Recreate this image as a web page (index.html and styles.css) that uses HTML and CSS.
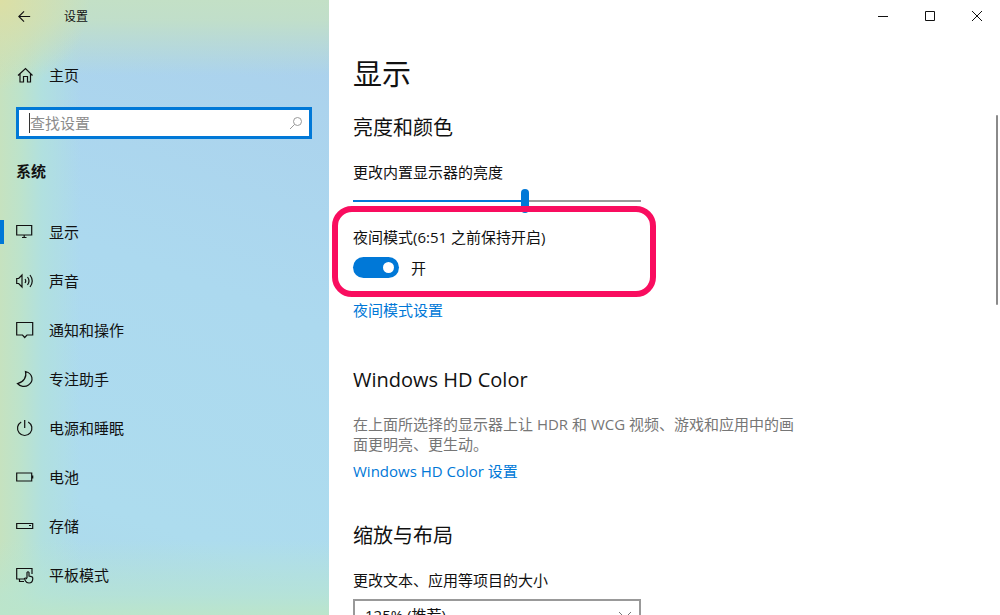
FILE: index.html
```html
<!DOCTYPE html>
<html lang="zh-CN">
<head>
    <meta charset="UTF-8">
    <meta name="viewport" content="width=device-width, initial-scale=1.0">
    <title>设置</title>
    <link rel="stylesheet" href="styles.css">
</head>
<body>
    <aside class="sidebar">
        <header class="titlebar">
            <button class="back" type="button" aria-label="后退">
                <svg class="icon" viewBox="0 0 18 18"><path d="M15 9H3M8.500 3.500L3 9l5.500 5.500"/></svg>
            </button>
            <span class="app-name">设置</span>
        </header>

        <a class="nav-link home" href="#">
            <svg class="icon" viewBox="0 0 18 18"><path d="M2 9.500L9.500 2.500l7 7M4 8v8h3.500v-5.500h4V16h3V8"/></svg>
            主页
        </a>

        <form class="search">
            <input type="text" placeholder="查找设置" aria-label="查找设置">
            <button type="submit" aria-label="搜索">
                <svg viewBox="0 0 14 14"><circle cx="8.500" cy="5.500" r="4"/><path d="M5.500 8.500L1 13"/></svg>
            </button>
        </form>

        <h2 class="group">系统</h2>

        <nav>
            <a class="nav-link active" href="#">
                <svg class="icon" viewBox="0 0 18 18"><path d="M.7 2.500h15v9.500h-15zM8.200 12v2.500M6 14.500h4.500"/></svg>
                显示
            </a>
            <a class="nav-link" href="#">
                <svg class="icon" viewBox="0 0 18 18"><path d="M.7 6.500h2L6 3v12L2.700 11.500h-2zM9 7q1.500 2 0 4M11.500 5q3 4 0 8M14 3q4.500 6 0 12"/></svg>
                声音
            </a>
            <a class="nav-link" href="#">
                <svg class="icon" viewBox="0 0 18 18"><path d="M.7 1.500h16v12.500H11L8.700 16.500 6.500 14H.7z"/></svg>
                通知和操作
            </a>
            <a class="nav-link" href="#">
                <svg class="icon" viewBox="0 0 18 18"><path d="M9.500 1.500C11 7 7.500 12.500 1.500 13.500 4 16.500 9 17.500 12.500 15 18 11.500 17 3.500 9.500 1.500z"/></svg>
                专注助手
            </a>
            <a class="nav-link" href="#">
                <svg class="icon" viewBox="0 0 18 18"><path d="M8.700 1v8M5.200 3a7.200 7.200 0 1 0 7 0"/></svg>
                电源和睡眠
            </a>
            <a class="nav-link" href="#">
                <svg class="icon" viewBox="0 0 18 18"><path d="M.7 5h15v8H.7zM16.700 7.500v3"/></svg>
                电池
            </a>
            <a class="nav-link" href="#">
                <svg class="icon" viewBox="0 0 18 18"><path d="M.7 6.500h16v5H.7zM13 8.500h2"/></svg>
                存储
            </a>
            <a class="nav-link" href="#">
                <svg class="icon" viewBox="0 0 18 18"><path d="M8 13H.7V2.500h15.300V8M3.500 13v2.500H8M11 12V6.500q1-1.500 2 0V10l2.500.7q1.500.3 1.300 2-.3 4.300-3.800 4.300-2.500 0-3.500-2L8.500 12.500q1-1.200 2.500.5"/></svg>
                平板模式
            </a>
        </nav>
    </aside>

    <main class="page">
        <div class="window-buttons">
            <button type="button" aria-label="最小化"><svg viewBox="0 0 12 12"><path d="M1 6.500h10"/></svg></button>
            <button type="button" aria-label="最大化"><svg viewBox="0 0 12 12"><path d="M1.500 1.500h9v9h-9z"/></svg></button>
            <button type="button" aria-label="关闭"><svg viewBox="0 0 12 12"><path d="M1 1l10 10M11 1L1 11"/></svg></button>
        </div>

        <div class="content">
            <h1>显示</h1>

            <section>
                <h2>亮度和颜色</h2>
                <label for="brightness">更改内置显示器的亮度</label>
                <input class="slider" type="range" id="brightness" min="0" max="100" value="60">

                <div class="night-mode">
                    <label for="night">夜间模式(6:51 之前保持开启)</label>
                    <div class="toggle-row">
                        <input class="toggle" type="checkbox" id="night" checked>
                        <span>开</span>
                    </div>
                </div>
                <a class="link" href="#">夜间模式设置</a>
            </section>

            <section class="hd-color">
                <h2>Windows HD Color</h2>
                <p>在上面所选择的显示器上让 HDR 和 WCG 视频、游戏和应用中的画面更明亮、更生动。</p>
                <a class="link" href="#">Windows HD Color 设置</a>
            </section>

            <section class="scale">
                <h2>缩放与布局</h2>
                <label for="scale">更改文本、应用等项目的大小</label>
                <div class="select">
                    <select id="scale">
                        <option>125% (推荐)</option>
                    </select>
                    <svg viewBox="0 0 14 14"><path d="M1 4l6 6 6-6"/></svg>
                </div>
            </section>
        </div>

        <div class="scroll-thumb"></div>
    </main>
</body>
</html>
```
FILE: styles.css
```css
* {
    box-sizing: border-box;
}

body {
    margin: 0;
    height: 100vh;
    display: flex;
    overflow: hidden;
    background: #ffffff;
    color: #111111;
    font-family: "Open Sans", "Noto Sans CJK SC", sans-serif;
    font-size: 15px;
    line-height: 20px;
}

h1, h2, p {
    margin: 0;
    font-weight: 400;
}

button {
    padding: 0;
    border: none;
    background: none;
    color: inherit;
}

svg {
    fill: none;
    stroke: currentColor;
}

.icon {
    width: 18px;
    height: 18px;
    flex: none;
    stroke-width: 1.2;
}

/* Sidebar */
.sidebar {
    flex: 0 1 329px;
    overflow: hidden;
    background:
        radial-gradient(circle at 0 0, #dcdfa4, rgba(220, 223, 164, 0) 90px),
        linear-gradient(to bottom, #c3e0c6, rgba(195, 224, 198, 0.9) 20px, rgba(195, 224, 198, 0) 75px),
        linear-gradient(to top, #bbe5cb, rgba(184, 229, 208, 0.7) 20px, rgba(184, 229, 220, 0) 75px),
        linear-gradient(to right, #c6e2bf, #bde3cb 20px, #b1e0df 42px, rgba(173, 220, 236, 0) 80px),
        linear-gradient(200deg, #abd0ec, #acd9ef 45%, #addcee 80%, #acd8e8);
}

.titlebar {
    display: flex;
    align-items: center;
    gap: 31px;
    height: 33px;
    padding-left: 16px;
}

.back {
    display: flex;
}

.back .icon {
    width: 17px;
    height: 17px;
}

.app-name {
    font-size: 12px;
}

.nav-link {
    display: flex;
    align-items: center;
    gap: 15px;
    height: 49px;
    padding: 0 16px;
    color: inherit;
    text-decoration: none;
}

.nav-link.active {
    background: linear-gradient(#0078d7, #0078d7) left center / 4px 24px no-repeat;
}

.home {
    margin-top: 17px;
}

.search {
    position: relative;
    display: flex;
    margin: 8px 17px 0 16px;
    height: 32px;
    border: 3px solid #0078d7;
    background: #ffffff;
}

/* text cursor */
.search::before {
    content: "";
    position: absolute;
    left: 10px;
    top: 3px;
    width: 1px;
    height: 20px;
    background: #333333;
}

.search input {
    flex: 1;
    min-width: 0;
    padding: 0 0 0 11px;
    border: none;
    outline: none;
    background: none;
    font: inherit;
}

.search input::placeholder {
    color: #8c8c8c;
}

.search button {
    width: 24px;
    color: #999999;
}

.search svg {
    display: block;
    width: 14px;
    height: 14px;
    margin-left: 4px;
}

.group {
    margin: 22px 16px 26px;
    font-size: 15px;
    font-weight: 700;
}

/* Page */
.page {
    position: relative;
    flex: 1;
    display: flex;
    flex-direction: column;
    min-width: 0;
}

.window-buttons {
    display: flex;
    justify-content: flex-end;
    flex: none;
}

.window-buttons button {
    display: flex;
    align-items: center;
    justify-content: center;
    width: 47px;
    height: 32px;
}

.window-buttons svg {
    width: 12px;
    height: 12px;
}

.content {
    flex: 1;
    min-height: 0;
    padding: 22px 24px;
    overflow-y: auto;
    scrollbar-width: none;
}

h1 {
    font-size: 29px;
    line-height: 40px;
}

.content h2 {
    margin: 20px 0;
    font-size: 20px;
    line-height: 28px;
}

.content label {
    display: block;
}

.slider {
    display: block;
    appearance: none;
    width: 100%;
    max-width: 288px;
    height: 24px;
    margin: 7px 0 0;
    background: linear-gradient(to right, #0078d7 60%, #999999 60%) center / 100% 2px no-repeat;
}

.slider::-webkit-slider-thumb {
    appearance: none;
    width: 8px;
    height: 24px;
    border-radius: 4px;
    background: #0078d7;
}

.night-mode {
    position: relative;
    max-width: 288px;
    margin-top: 14px;
}

/* highlight frame around the switch */
.night-mode::after {
    content: "";
    position: absolute;
    inset: -21px -15px -19px -21px;
    border: 6px solid #f90d5f;
    border-radius: 20px;
    pointer-events: none;
}

.toggle-row {
    display: flex;
    align-items: center;
    gap: 12px;
    margin-top: 10px;
}

.toggle {
    appearance: none;
    display: flex;
    align-items: center;
    width: 46px;
    height: 21px;
    margin: 0;
    padding: 0 5px;
    border-radius: 11px;
    background: #999999;
}

.toggle::before {
    content: "";
    width: 11px;
    height: 11px;
    border-radius: 50%;
    background: #ffffff;
}

.toggle:checked {
    justify-content: flex-end;
    background: #0078d7;
}

.link {
    display: table;
    color: #0078d7;
    text-decoration: none;
}

.night-mode + .link {
    margin-top: 22px;
}

.hd-color {
    margin-top: 46px;
}

.hd-color p {
    max-width: 450px;
    margin-bottom: 7px;
    color: #767676;
}

.scale {
    margin-top: 41px;
}

.select {
    position: relative;
    max-width: 288px;
    margin-top: 9px;
}

.select select {
    appearance: none;
    display: block;
    width: 100%;
    height: 32px;
    padding: 0 32px 0 10px;
    border: 2px solid #999999;
    border-radius: 0;
    background: #ffffff;
    color: inherit;
    font: inherit;
}

.select svg {
    position: absolute;
    right: 9px;
    top: 9px;
    width: 14px;
    height: 14px;
    color: #767676;
    pointer-events: none;
}

.scroll-thumb {
    position: absolute;
    right: 2px;
    top: 115px;
    width: 2px;
    height: 190px;
    border-radius: 1px;
    background: #8a8a8a;
}
```
